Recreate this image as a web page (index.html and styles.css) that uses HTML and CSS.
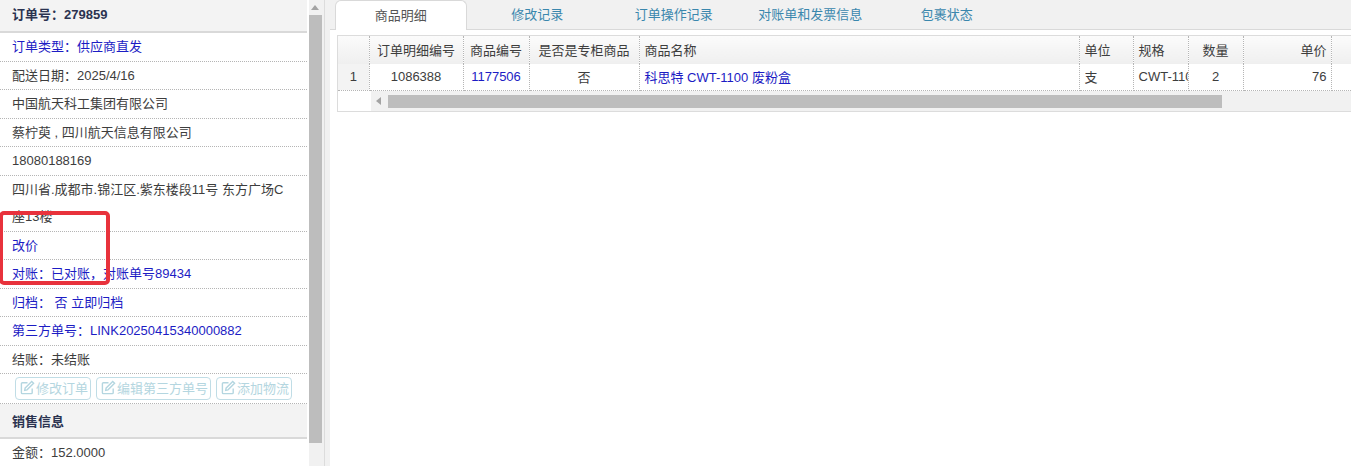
FILE: index.html
```html
<!DOCTYPE html>
<html lang="zh-CN">
<head>
    <meta charset="UTF-8">
    <title>订单详情</title>
    <link rel="stylesheet" href="styles.css">
</head>
<body>
    <div class="page">
        <div class="side">
            <div class="info">
                <div class="info-head">订单号&#xFF1A;279859</div>
                <div class="info-row link">订单类型&#xFF1A;供应商直发</div>
                <div class="info-row">配送日期&#xFF1A;2025/4/16</div>
                <div class="info-row">中国航天科工集团有限公司</div>
                <div class="info-row">蔡柠萸 , 四川航天信息有限公司</div>
                <div class="info-row">18080188169</div>
                <div class="info-row">四川省.成都市.锦江区.紫东楼段11号 东方广场C座13楼</div>
                <div class="info-row link">改价</div>
                <div class="info-row link">对账&#xFF1A;已对账&#xFF0C;对账单号89434</div>
                <div class="info-row link">归档&#xFF1A;&nbsp;否 立即归档</div>
                <div class="info-row link">第三方单号&#xFF1A;LINK20250415340000882</div>
                <div class="info-row">结账&#xFF1A;未结账</div>
                <div class="info-buttons">
                    <button class="btn" type="button">
                        <svg class="btn-icon" viewBox="0 0 16 16"><path d="M13 9v4.500a1 1 0 0 1-1 1H2.500a1 1 0 0 1-1-1V4a1 1 0 0 1 1-1H8"/><path d="M5.500 8.500 12.500 1.500 14.500 3.500 7.500 10.500 5 11z"/></svg>修改订单
                    </button>
                    <button class="btn" type="button">
                        <svg class="btn-icon" viewBox="0 0 16 16"><path d="M13 9v4.500a1 1 0 0 1-1 1H2.500a1 1 0 0 1-1-1V4a1 1 0 0 1 1-1H8"/><path d="M5.500 8.500 12.500 1.500 14.500 3.500 7.500 10.500 5 11z"/></svg>编辑第三方单号
                    </button>
                    <button class="btn" type="button">
                        <svg class="btn-icon" viewBox="0 0 16 16"><path d="M13 9v4.500a1 1 0 0 1-1 1H2.500a1 1 0 0 1-1-1V4a1 1 0 0 1 1-1H8"/><path d="M5.500 8.500 12.500 1.500 14.500 3.500 7.500 10.500 5 11z"/></svg>添加物流
                    </button>
                </div>
                <div class="info-head second">销售信息</div>
                <div class="info-row">金额&#xFF1A;152.0000</div>
            </div>
            <div class="vbar">
                <div class="arrow-up"></div>
                <div class="vbar-thumb"></div>
            </div>
        </div>

        <div class="main">
            <div class="tabs">
                <div class="tab active">商品明细</div>
                <div class="tab">修改记录</div>
                <div class="tab">订单操作记录</div>
                <div class="tab">对账单和发票信息</div>
                <div class="tab">包裹状态</div>
            </div>
            <div class="grid">
                <table class="items">
                    <colgroup>
                        <col class="c-index">
                        <col class="c-detail">
                        <col class="c-code">
                        <col class="c-flag">
                        <col class="c-name">
                        <col class="c-unit">
                        <col class="c-spec">
                        <col class="c-qty">
                        <col class="c-price">
                        <col class="c-rest">
                    </colgroup>
                    <thead>
                        <tr>
                            <th></th>
                            <th>订单明细编号</th>
                            <th>商品编号</th>
                            <th>是否是专柜商品</th>
                            <th class="left">商品名称</th>
                            <th class="left">单位</th>
                            <th class="left">规格</th>
                            <th>数量</th>
                            <th class="right">单价</th>
                            <th></th>
                        </tr>
                    </thead>
                    <tbody>
                        <tr>
                            <td class="index">1</td>
                            <td>1086388</td>
                            <td class="link">1177506</td>
                            <td>否</td>
                            <td class="left link">科思特 CWT-1100 废粉盒</td>
                            <td class="left">支</td>
                            <td class="left">CWT-1100</td>
                            <td>2</td>
                            <td class="right">76</td>
                            <td></td>
                        </tr>
                    </tbody>
                </table>
                <div class="hbar">
                    <div class="hbar-track">
                        <div class="arrow-left"></div>
                        <div class="hbar-thumb"></div>
                    </div>
                </div>
            </div>
        </div>
    </div>

    <div class="mark"></div>
</body>
</html>
```

FILE: styles.css
```css
html, body {
    height: 100%;
}

body {
    margin: 0;
    overflow: hidden;
    background-color: #fff;
    color: #3d3d3d;
    font-family: "Liberation Sans", "Noto Sans CJK SC", sans-serif;
    font-size: 13px;
}

.page {
    display: flex;
    height: 466px;
}

.link {
    color: #1c1cc4;
}

/* Left column */
.side {
    display: flex;
    flex: none;
    width: 330px;
    overflow: hidden;
    background-color: #f1f1f1;
}

.info {
    flex: none;
    width: 309px;
    height: 466px;
    padding-right: 2px;
    box-sizing: border-box;
    overflow: hidden;
    background-color: #fff;
}

.info-head {
    height: 31px;
    padding-left: 12px;
    border-bottom: 2px solid #d9d9d9;
    background-color: #f3f3f3;
    color: #2b3350;
    font-weight: bold;
    line-height: 30px;
}

.info-head.second {
    height: 33px;
    line-height: 35px;
}

.info-row {
    padding: 0 12px;
    border-bottom: 1px dotted #b5b5b5;
    line-height: 27.5px;
}

.info-buttons {
    display: flex;
    gap: 5px;
    height: 30px;
    padding: 3px 0 0 15px;
    box-sizing: border-box;
    border-bottom: 1px dotted #b5b5b5;
}

.btn {
    display: flex;
    align-items: center;
    min-width: 76px;
    height: 23px;
    padding: 0 2px 2px 4px;
    border: 1px solid #c0dde6;
    border-radius: 4px;
    background-color: #fff;
    color: #b4d6e0;
    font-family: inherit;
    font-size: 13px;
}

.btn-icon {
    width: 15px;
    height: 15px;
    margin-right: 1px;
    fill: none;
    stroke: #b4d6e0;
    stroke-width: 1.500;
}

.vbar {
    flex: none;
    width: 16px;
    height: 466px;
    border-right: 1px solid #dcdcdc;
    box-sizing: border-box;
}

.arrow-up {
    width: 0;
    margin: 5px auto 0 2px;
    border: 4px solid transparent;
    border-top: 0;
    border-bottom: 5px solid #a3a3a3;
}

.vbar-thumb {
    width: 13px;
    height: 428px;
    margin-top: 5px;
    background-color: #bdbdbd;
}

/* Right column */
.main {
    flex: 1;
    min-width: 0;
    background-color: #fff;
}

.tabs {
    display: flex;
    gap: 5px;
    height: 29px;
    padding-left: 5px;
    border-bottom: 1px solid #d9d9d9;
    background-color: #f1f1f1;
}

.tab {
    width: 131.500px;
    height: 30px;
    flex: none;
    color: #3a87ad;
    line-height: 29px;
    text-align: center;
}

.tab.active {
    box-sizing: border-box;
    border: 1px solid #d9d9d9;
    border-bottom: 0;
    border-radius: 6px 6px 0 0;
    background-color: #fff;
    color: #555;
}

.grid {
    width: 1021px;
    margin: 5px 0 0 7px;
    border: 1px solid #dcdcdc;
    border-right: 0;
    overflow: hidden;
}

.items {
    width: 1014px;
    border-collapse: collapse;
    table-layout: fixed;
}

.c-index { width: 31px; }
.c-detail { width: 94px; }
.c-code { width: 66px; }
.c-flag { width: 110px; }
.c-name { width: 440px; }
.c-unit { width: 54px; }
.c-spec { width: 55px; }
.c-qty { width: 55px; }
.c-price { width: 88px; }
.c-rest { width: 21px; }

.items th,
.items td {
    padding: 0 5px 2px;
    overflow: hidden;
    border-right: 1px dotted #b5b5b5;
    text-align: center;
    white-space: nowrap;
}

.items th {
    height: 26px;
    background: linear-gradient(#fbfbfb, #efefef);
    font-weight: normal;
}

.items td {
    height: 24px;
    border-bottom: 1px dotted #b5b5b5;
}

.items .left {
    text-align: left;
}

.items .right {
    padding-right: 4px;
    text-align: right;
}

.items .index {
    background-color: #f3f3f3;
}

.hbar {
    height: 20px;
    padding-left: 33px;
}

.hbar-track {
    display: flex;
    align-items: center;
    height: 20px;
    background-color: #f1f1f1;
}

.arrow-left {
    flex: none;
    width: 0;
    margin-left: 5px;
    border: 4px solid transparent;
    border-left: 0;
    border-right: 5px solid #a3a3a3;
}

.hbar-thumb {
    flex: none;
    width: 834px;
    height: 13px;
    margin-left: 7px;
    background-color: #bdbdbd;
}

/* Red annotation drawn over the list */
.mark {
    position: absolute;
    top: 211px;
    left: -1px;
    width: 103px;
    height: 66px;
    border: 4px solid #e8323c;
    border-radius: 5px;
}
```
